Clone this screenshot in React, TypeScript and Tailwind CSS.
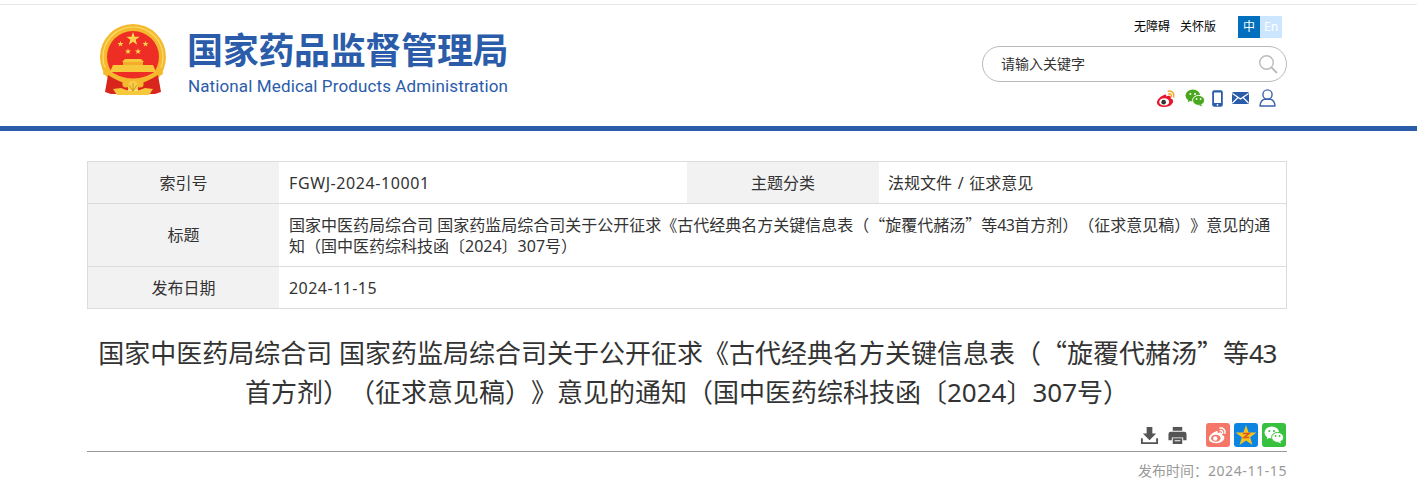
import React from "react";

const F = '"Noto Sans","Noto Sans CJK SC",sans-serif';
const CJK = '"Noto Sans CJK SC",sans-serif';

function Star({ cx, cy, r, fill = "#fcd34d" }: { cx: number; cy: number; r: number; fill?: string }) {
  const pts: string[] = [];
  for (let i = 0; i < 10; i++) {
    const a = (Math.PI / 5) * i - Math.PI / 2;
    const rr = i % 2 === 0 ? r : r * 0.4;
    pts.push(`${(cx + rr * Math.cos(a)).toFixed(2)},${(cy + rr * Math.sin(a)).toFixed(2)}`);
  }
  return <polygon points={pts.join(" ")} fill={fill} />;
}

function Emblem() {
  return (
    <svg width="68" height="71" viewBox="0 0 68 71" className="block shrink-0">
      <circle cx="34" cy="33" r="33" fill="#f4b92e" />
      <circle cx="34" cy="33" r="30" fill="none" stroke="#fbdc6a" strokeWidth="1.2" />
      <circle cx="34" cy="33" r="26" fill="#ee2d24" />
      <Star cx={34} cy={15} r={7} />
      <Star cx={21.5} cy={20} r={3.2} />
      <Star cx={46.5} cy={20} r={3.2} />
      <Star cx={29} cy={27.5} r={3.2} />
      <Star cx={39} cy={27.5} r={3.2} />
      <path d="M26 35h16l3 3H23z" fill="#f7c73c" />
      <path d="M24 38h20v3H24z" fill="#f3ad2a" />
      <path d="M14 41h40l3 7H11z" fill="#f7c73c" />
      <path d="M5 43 Q34 66 63 43 L64 50 Q34 70 4 50Z" fill="#f4b92e" />
      <path d="M9 51 Q20 58 29 60 L29 70 H12 L6 68 Z" fill="#d8261c" />
      <path d="M59 51 Q48 58 39 60 L39 70 H56 L62 68 Z" fill="#d8261c" />
      <path d="M14 65 L22 64 Q34 70 46 64 L54 65 L50 71 H18 Z" fill="#f7c73c" />
      <circle cx="27" cy="60" r="3.6" fill="#f4b92e" />
      <circle cx="41" cy="60" r="3.6" fill="#f4b92e" />
      <circle cx="34" cy="62" r="5" fill="#f9cf4a" />
      <path d="M34 59v8M30 61l4 6 4-6" fill="none" stroke="#c98716" strokeWidth=".8" />
    </svg>
  );
}

function Weibo({ s = 22, c = "#e6162d", wave = "#f5a623", pupil = "#333" }: { s?: number; c?: string; wave?: string; pupil?: string }) {
  return (
    <svg width={s} height={s} viewBox="0 0 22 22" className="block">
      <path d="M9.5 7C5 8 1 12 1 15.2 1 18.4 5 20 9 20c5 0 9-3 9-6 0-1.800-1.600-2.600-2.700-2.900.5-1.400.3-2.500-1-2.900-1.200-.3-3 .4-3.600.6.4-1.500-.2-2.600-2.200-1.800Z" fill={c} />
      <ellipse cx="8.6" cy="14.6" rx="5.2" ry="3.8" fill={pupil === "#333" ? "#fff" : pupil} />
      <circle cx="8" cy="14.8" r="2.4" fill={pupil === "#333" ? "#333" : "#fff"} />
      <path d="M13 3.400c3.600-.8 6.600 2.200 5.600 5.800M13.400 6.200c1.800-.4 3.200 1 2.700 2.800" fill="none" stroke={wave} strokeWidth="1.6" strokeLinecap="round" />
    </svg>
  );
}

function Wechat({ s = 20, a = "#4aa81f", b = "#4aa81f", gap = "#fff" }: { s?: number; a?: string; b?: string; gap?: string }) {
  return (
    <svg width={s} height={s} viewBox="0 0 20 20" className="block">
      <ellipse cx="7.8" cy="7.6" rx="7.3" ry="6" fill={a} />
      <path d="M3.5 11 2.8 14.2 6.6 12.2Z" fill={a} />
      <ellipse cx="13.6" cy="12.4" rx="6" ry="5" fill={b} stroke={gap} strokeWidth="1" />
      <path d="M16 16 17.2 18.6 13.8 17Z" fill={b} />
      <circle cx="5.4" cy="6" r="1" fill={gap} />
      <circle cx="10" cy="6" r="1" fill={gap} />
      <circle cx="11.6" cy="11" r=".9" fill={gap} />
      <circle cx="15.6" cy="11" r=".9" fill={gap} />
    </svg>
  );
}

function Q({ children }: { children: React.ReactNode }) {
  return <span style={{ fontFamily: CJK }}>{children}</span>;
}

export default function App() {
  const cellH = "bg-[#f2f2f2] flex items-center justify-center text-[16px] text-[#333]";
  const cellV = "bg-white flex items-center pl-[10px] pt-px text-[16px] leading-[21px] text-[#333]";
  return (
    <div className="w-[1417px] h-[496px] overflow-hidden bg-white [text-spacing-trim:space-all]" style={{ fontFamily: F }}>
      <header className="mt-[4px] border-t border-[#e8e8e8] border-b-[5px] border-b-[#2a5caa]">
        <div className="w-[1200px] h-[121px] ml-[87px] flex justify-between">
          <div className="flex items-start pt-[19px] pl-[12px] gap-[20px]">
            <Emblem />
            <div className="flex flex-col pt-[2px]">
              <div className="text-[36px] leading-[50px] font-bold text-[#2a5caa] tracking-[-0.3px] whitespace-nowrap">国家药品监督管理局</div>
              <div className="text-[17px] leading-[22px] tracking-[0.12px] pl-px text-[#2a5caa] whitespace-nowrap -mt-[1px]" style={{ fontFamily: "Roboto,sans-serif" }}>National Medical Products Administration</div>
            </div>
          </div>
          <div className="w-[305px] flex flex-col items-stretch">
            <div className="flex justify-end items-center pt-[11px] h-[33px]">
              <span className="text-[12px] text-black mr-[10px]">无障碍</span>
              <span className="text-[12px] text-black mr-[22px]">关怀版</span>
              <span className="w-[22px] h-[22px] bg-[#006fbe] text-white text-[12px] flex items-center justify-center">中</span>
              <span className="w-[22px] h-[22px] bg-[#cce6ff] text-white text-[12px] flex items-center justify-center mr-[5px]">En</span>
            </div>
            <div className="mt-[8px] h-[36px] rounded-[18px] border border-[#b9b9b9] flex items-center justify-between pl-[18px] pr-[8px]">
              <span className="text-[14px] text-[#333] -mt-[2px]">请输入关键字</span>
              <svg width="20" height="20" viewBox="0 0 20 20" fill="none" stroke="#bbb" strokeWidth="1.4"><circle cx="8.5" cy="8.5" r="6.8" /><path d="M13.5 13.5 19 19" strokeWidth="1.8" /></svg>
            </div>
            <div className="flex justify-end items-center mt-[5px] h-[22px] pr-[11px]">
              <span className="mr-[8px]"><Weibo s={21} /></span>
              <span className="mr-[7px]"><Wechat s={20} /></span>
              <svg width="11" height="17" viewBox="0 0 11 17" className="mr-[9px]"><rect x=".2" y=".2" width="10.6" height="16.6" rx="2" fill="#2a5caa" /><rect x="2" y="2.5" width="7" height="10.5" fill="#fff" /><circle cx="5.5" cy="14.8" r=".9" fill="#fff" /></svg>
              <svg width="17" height="12" viewBox="0 0 17 12" className="mr-[10px]"><rect width="17" height="12" rx="1.5" fill="#2a5caa" /><path d="M.5 1.5 8.5 7 16.5 1.5M.5 11 6 5.500M16.500 11 11 5.500" fill="none" stroke="#fff" strokeWidth="1.2" /></svg>
              <svg width="17" height="18" viewBox="0 0 17 18" fill="none" stroke="#3b62ad" strokeWidth="1.4"><circle cx="8.5" cy="5.5" r="4.6" /><path d="M1 17c0-4 2.500-6.400 4.500-6.800h6c2 .4 4.500 2.800 4.500 6.800Z" strokeLinejoin="round" /></svg>
            </div>
          </div>
        </div>
      </header>

      <div className="ml-[87px] mt-[30px] w-[1200px] border border-[#dcdcdc]">
        <div className="grid grid-cols-[191px_408px_192px_407px] h-[41px]">
          <div className={cellH}>索引号</div>
          <div className={cellV}><span className="tracking-[0.6px]">FGWJ-2024-10001</span></div>
          <div className={cellH}>主题分类</div>
          <div className={`${cellV} !pl-[9px]`}><span>法规文件<span className="mx-[1.5px]"> / </span>征求意见</span></div>
        </div>
        <div className="grid grid-cols-[191px_1007px] h-[63px] border-t border-[#dcdcdc]">
          <div className={cellH}>标题</div>
          <div className={cellV}>
            <span>国家中医药局综合司 国家药监局综合司关于公开征求《古代经典名方关键信息表（<Q>“</Q>旋覆代赭汤<Q>”</Q>等<span className="tracking-[-0.6px]">43</span>首方剂）（征求意见稿）》意见的通<br />知（国中医药综科技函〔2024〕307号）</span>
          </div>
        </div>
        <div className="grid grid-cols-[191px_1007px] h-[42px] border-t border-[#dcdcdc]">
          <div className={cellH}>发布日期</div>
          <div className={cellV}><span className="tracking-[0.45px]">2024-11-15</span></div>
        </div>
      </div>

      <div className="ml-[87px] w-[1200px] mt-[23px] text-center text-[26px] leading-[39px] text-[#333]">
        国家中医药局综合司 国家药监局综合司关于公开征求《古代经典名方关键信息表（<Q>“</Q>旋覆代赭汤<Q>”</Q>等<span className="tracking-[-1.5px]">43</span><br />首方剂）（征求意见稿）》意见的通知（国中医药综科技函〔2024〕307号）
      </div>

      <div className="ml-[87px] w-[1200px] mt-[11px] h-[28px] flex justify-end items-start border-b border-[#999] box-content">
        <svg width="19" height="19" viewBox="0 0 20 20" className="mt-[3px] mr-[9px]" fill="#555"><path d="M7 1h6v7h4l-7 7-7-7h4Z" /><path d="M1 13v6h18v-6h-2v4H3v-4Z" /></svg>
        <svg width="19" height="19" viewBox="0 0 20 20" className="mt-[3px] mr-[19px]" fill="#555"><path d="M5 1h10v4H5z" /><path d="M3 6h14a2.5 2.5 0 0 1 2.5 2.5V15H16v-3H4v3H.5V8.500A2.500 2.500 0 0 1 3 6Z" /><path fillRule="evenodd" d="M5 13h10v6H5zM7 15v1h6v-1Z" /></svg>
        <span className="w-[24px] h-[24px] rounded-[3px] bg-[#f5776a] flex items-center justify-center mr-[4px]"><Weibo s={20} c="#fff" wave="#fff" pupil="#f5776a" /></span>
        <span className="w-[24px] h-[24px] rounded-[3px] bg-[#0b84e3] flex items-center justify-center mr-[4px]">
          <svg width="22" height="22" viewBox="0 0 22 22"><Star cx={11} cy={12} r={11} fill="#f8c21c" /><path d="M8 9.500h6l-5 4h5" fill="none" stroke="#d9541e" strokeWidth="1.5" /></svg>
        </span>
        <span className="w-[24px] h-[24px] rounded-[3px] bg-[#37c13e] flex items-center justify-center mr-px"><Wechat s={20} a="#fff" b="#fff" gap="#37c13e" /></span>
      </div>

      <div className="ml-[87px] w-[1200px] mt-[9px] text-right text-[14px] leading-[20px] text-[#999]">发布时间：<span className="tracking-[0.6px]">2024-11-15</span></div>
    </div>
  );
}
